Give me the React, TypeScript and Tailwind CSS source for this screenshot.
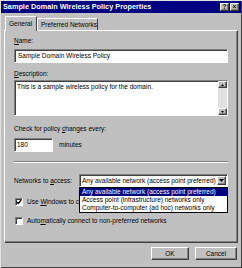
import { useState } from 'react';

const sunken =
  'bg-white border border-t-[#808080] border-l-[#808080] border-b-white border-r-white shadow-[inset_1px_1px_0_#404040]';
const raised =
  'bg-[#c0c0c0] border border-t-white border-l-white border-b-[#404040] border-r-[#404040] shadow-[inset_-1px_-1px_0_#808080]';

export default function App() {
  const [useWindows, setUseWindows] = useState(true);
  const [autoConnect, setAutoConnect] = useState(false);

  return (
    <div className="w-[242px] h-[268px] bg-[#c0c0c0] flex flex-col overflow-hidden text-[6.5px] leading-[8px] text-black font-['Liberation_Sans',Arial,sans-serif] shadow-[inset_1px_1px_0_#dfdfdf,inset_-1px_-1px_0_#404040]">
      {/* Title bar */}
      <div className="mx-[1px] mt-[1px] h-[12px] bg-[#000080] flex items-center justify-between pl-[2px] pr-[2px]">
        <span className="text-white font-bold text-[7.3px]">Sample Domain Wireless Policy Properties</span>
        <div className="flex gap-[1px]">
          <TitleButton label="?" />
          <TitleButton label="×" />
        </div>
      </div>

      {/* Tabs */}
      <div className="mt-[3px] pl-[5px] flex items-end h-[14px]">
        <div className="relative z-10 -mb-px h-[15px] w-[32px] bg-[#c0c0c0] border-t border-l border-white border-r border-r-[#404040] rounded-t-[1px] pl-[3px] pt-[3px]">
          General
        </div>
        <div className="h-[12px] w-[61px] border-t border-l border-white border-r border-r-[#404040] rounded-t-[1px] pl-[3px] pt-[2px]">
          Preferred Networks
        </div>
      </div>

      {/* Panel */}
      <div className="mx-[4px] w-[234px] h-[213px] border border-t-white border-l-white border-b-[#404040] border-r-[#404040] shadow-[inset_-1px_-1px_0_#808080] pl-[9px] pr-[8px] pt-[6px] flex flex-col">
        <label className="h-[8px]">
          <u>N</u>ame:
        </label>
        <div className={`${sunken} mt-[4px] h-[14px] w-[214px] pl-[3px] flex items-center`}>
          Sample Domain Wireless Policy
        </div>

        <label className="mt-[7px] h-[8px]">
          <u>D</u>escription:
        </label>
        <div className={`${sunken} mt-[2px] h-[36px] w-[214px] flex`}>
          <div className="flex-1 pl-[2px] pt-[2px]">This is a sample wireless policy for the domain.</div>
          <div className="w-[9px] bg-[#e0e0e0] flex flex-col justify-between">
            <ScrollArrow up />
            <ScrollArrow />
          </div>
        </div>

        <label className="mt-[9px] h-[8px]">
          Check for policy <u>c</u>hanges every:
        </label>
        <div className="mt-[5px] flex items-center gap-[6px]">
          <div className={`${sunken} h-[14px] w-[39px] pl-[2px] flex items-center`}>180</div>
          <span>minutes</span>
        </div>

        <div className="mt-[9px] w-[214px] h-[2px] border-t border-[#808080] border-b border-b-white" />

        <div className="mt-[11px] flex items-center relative">
          <span className="w-[65px]">
            Networks to <u>a</u>ccess:
          </span>
          <div className={`${sunken} h-[13px] w-[149px] flex items-center`}>
            <span className="flex-1 pl-[2px] whitespace-nowrap overflow-hidden">
              Any available network (access point preferred)
            </span>
            <div className={`${raised} w-[9px] h-[9px] mr-[1px] flex items-center justify-center`}>
              <svg width="5" height="3" viewBox="0 0 5 3">
                <path d="M0 0h5L2.5 3z" fill="#000" />
              </svg>
            </div>
          </div>

          {/* Open dropdown list */}
          <div className="absolute z-20 left-[65px] top-[13px] w-[149px] bg-white border border-black flex flex-col">
            <div className="h-[8px] bg-[#000080] text-white pl-[2px] whitespace-nowrap">
              Any available network (access point preferred)
            </div>
            <div className="h-[8px] pl-[2px] whitespace-nowrap">Access point (infrastructure) networks only</div>
            <div className="h-[8px] pl-[2px] whitespace-nowrap">Computer-to-computer (ad hoc) networks only</div>
          </div>
        </div>

        <Checkbox
          className="mt-[11px]"
          checked={useWindows}
          onChange={() => setUseWindows(!useWindows)}
          label={
            <>
              Use <u>W</u>indows to configure wireless network settings
            </>
          }
        />
        <Checkbox
          className="mt-[11px]"
          checked={autoConnect}
          onChange={() => setAutoConnect(!autoConnect)}
          label={
            <>
              Auto<u>m</u>atically connect to non-preferred networks
            </>
          }
        />
      </div>

      {/* Buttons */}
      <div className="mt-[4px] flex justify-end gap-[6px] pr-[5px]">
        <button className={`${raised} shadow-[inset_-1px_-1px_0_#808080,0_0_0_1px_#000] w-[38px] h-[13px] text-[6.5px] leading-[8px]`}>
          OK
        </button>
        <button className={`${raised} w-[42px] h-[13px] text-[6.5px] leading-[8px]`}>Cancel</button>
      </div>
    </div>
  );
}

function TitleButton({ label }: { label: string }) {
  return (
    <div className={`${raised} w-[9px] h-[8px] flex items-center justify-center text-[6.5px] font-bold leading-none`}>
      {label}
    </div>
  );
}

function ScrollArrow({ up }: { up?: boolean }) {
  return (
    <div className={`${raised} w-[9px] h-[7px] flex items-center justify-center`}>
      <svg width="3" height="2" viewBox="0 0 3 2">
        <path d={up ? 'M0 2h3L1.5 0z' : 'M0 0h3L1.5 2z'} fill="#000" />
      </svg>
    </div>
  );
}

interface CheckboxProps {
  className?: string;
  checked: boolean;
  onChange: () => void;
  label: React.ReactNode;
}

function Checkbox({ className, checked, onChange, label }: CheckboxProps) {
  return (
    <div className={`flex items-center gap-[4px] pl-[1px] ${className ?? ''}`} onClick={onChange}>
      <div className={`${sunken} w-[8px] h-[8px] flex items-center justify-center`}>
        {checked && (
          <svg width="6" height="6" viewBox="0 0 6 6">
            <path d="M0.8 3l1.5 1.5L5.2 1" stroke="#000" strokeWidth="1.2" fill="none" />
          </svg>
        )}
      </div>
      <span className="whitespace-nowrap">{label}</span>
    </div>
  );
}
